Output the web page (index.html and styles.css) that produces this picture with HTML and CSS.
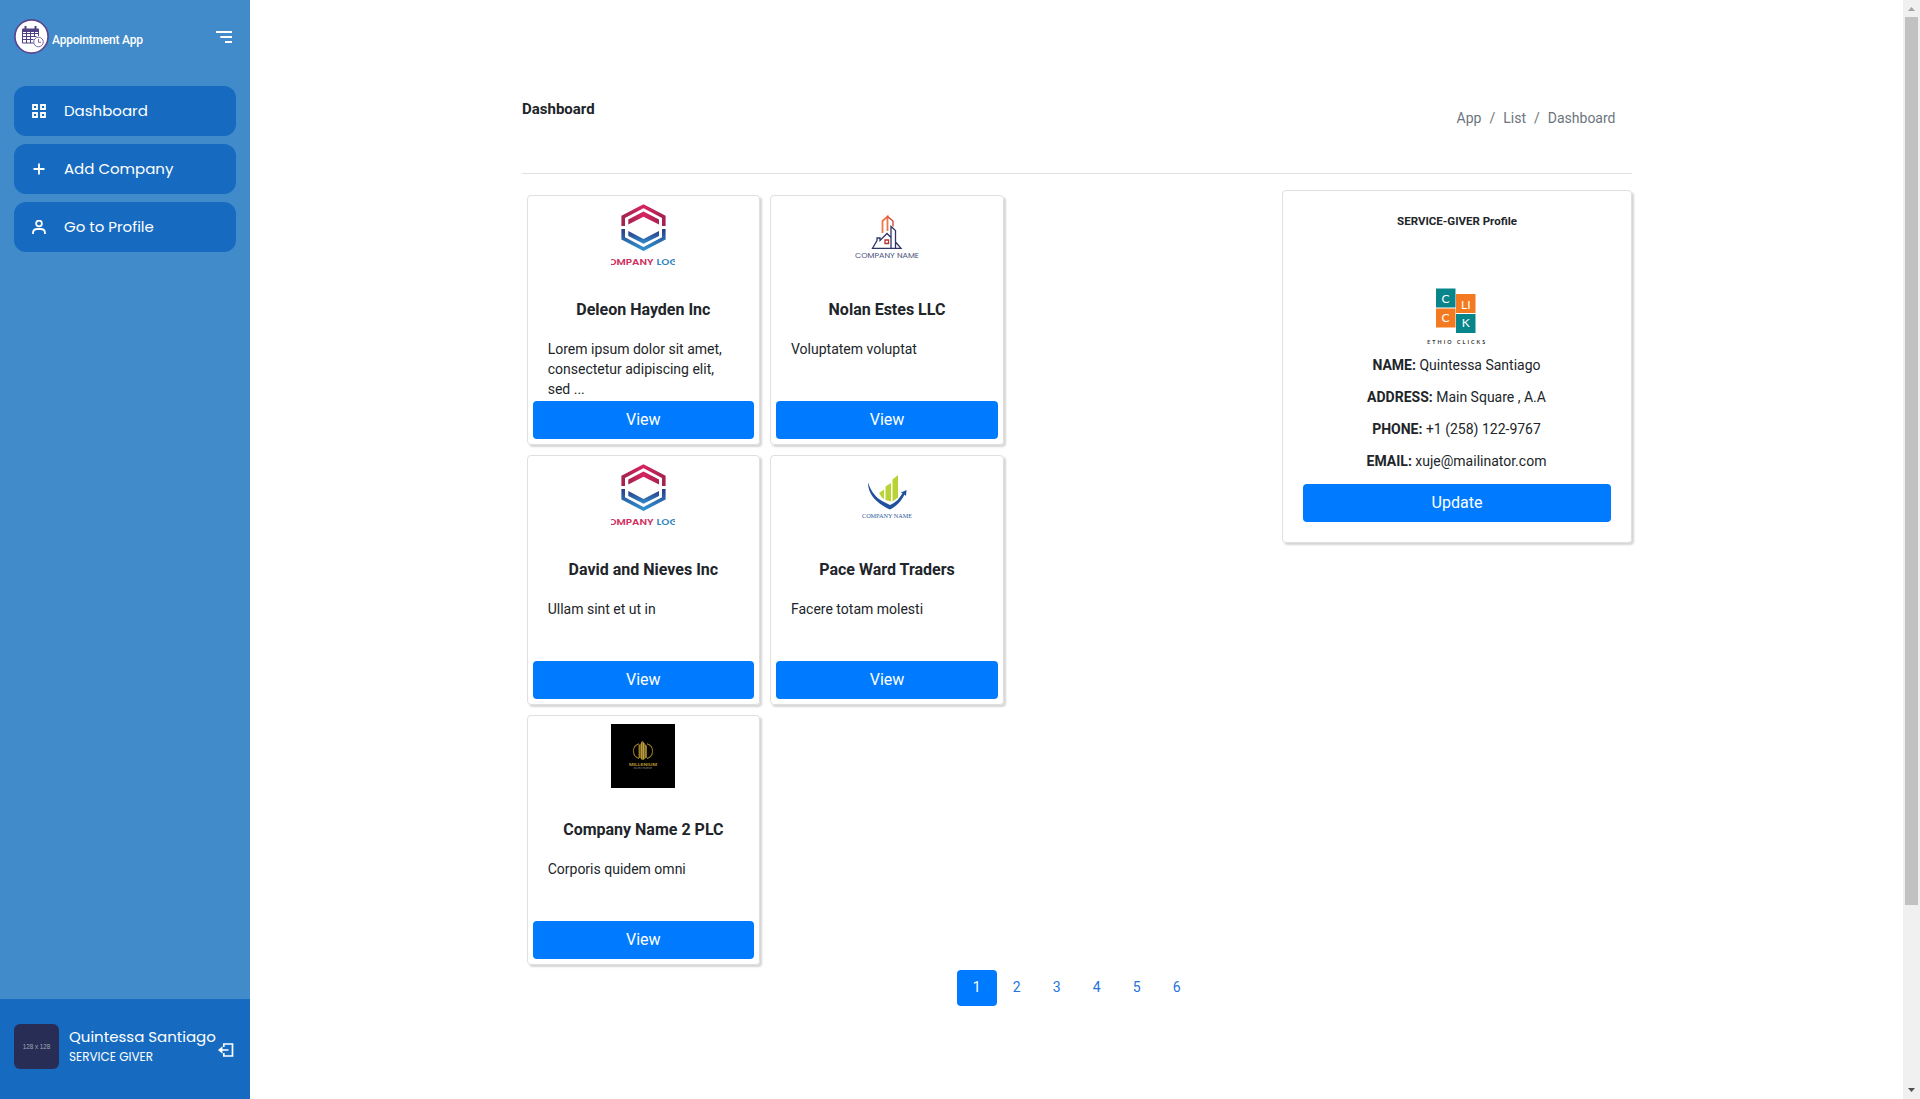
FILE: index.html
```html
<!DOCTYPE html>
<html lang="en">
<head>
<meta charset="utf-8">
<title>Appointment App</title>
<link rel="stylesheet" href="styles.css">
</head>
<body>
<svg class="defs" width="0" height="0" aria-hidden="true">
  <defs>
    <linearGradient id="pink" x1="0" y1="0" x2="1" y2="0"><stop offset="0" stop-color="#a32351"/><stop offset=".5" stop-color="#d9235f"/><stop offset="1" stop-color="#a32351"/></linearGradient>
    <linearGradient id="blue" x1="0" y1="0" x2="0" y2="1"><stop offset="0" stop-color="#2b3d85"/><stop offset="1" stop-color="#2f8fcd"/></linearGradient>
    <linearGradient id="gold" x1="0" y1="0" x2="1" y2="0"><stop offset="0" stop-color="#8a6d22"/><stop offset=".5" stop-color="#c9a946"/><stop offset="1" stop-color="#8a6d22"/></linearGradient>
    <symbol id="hexagon" viewBox="0 0 64 64">
      <path d="M12.200 22V12.900L32.500 2.200l20.300 10.700V22" fill="none" stroke="url(#pink)" stroke-width="3.600"/>
      <path d="M17.300 15.600L32.500 7.600l15.500 8v5L32.500 12.800l-15.200 7.800z" fill="url(#pink)"/>
      <path d="M12.200 25v9.300L32.500 45l20.300-10.700V25" fill="none" stroke="url(#blue)" stroke-width="3.600"/>
      <path d="M17.300 27L32.500 35l15.500-8v5L32.500 39.800l-15.200-7.800z" fill="url(#blue)"/>
      <text x="-10.500" y="60.500" textLength="53" lengthAdjust="spacingAndGlyphs" class="brand brand-red">COMPANY</text>
      <text x="45.500" y="60.500" textLength="29" lengthAdjust="spacingAndGlyphs" class="brand brand-blue">LOGO</text>
    </symbol>
  </defs>
</svg>
<div class="app">
  <aside class="sidebar">
    <header class="brand-row">
      <svg class="app-logo" viewBox="0 0 35 35">
        <circle cx="17.500" cy="17.500" r="16.600" fill="#fff" stroke="#5b458f" stroke-width="1.700"/>
        <g fill="none" stroke="#4e4083" stroke-width="1">
          <path d="M20 24H8.500V10h16v7M8.500 14.500h16M8.500 17.500h14M8.500 20.500h11M12.500 13v11M16.500 13v11M20.500 13v5"/>
          <path d="M8.500 11.500h16" stroke-width="3"/>
          <path d="M11.500 7v4M21.500 7v4" stroke-width="2"/>
          <circle cx="24.500" cy="23" r="4.800" fill="#fff" stroke="#7c68a8"/>
          <path d="M24.500 20v3.300H27" stroke="#7c68a8"/>
        </g>
      </svg>
      <span class="app-name">Appointment App</span>
      <svg class="menu-icon" viewBox="0 0 16 12"><path d="M0 1h16M4.300 6H16M9 11h7" stroke="#fff" stroke-width="1.900"/></svg>
    </header>
    <nav class="nav">
      <a class="nav-item"><svg class="nav-icon" viewBox="0 0 14 14"><path d="M1 1h4v4H1zM9 1h4v4H9zM1 9h4v4H1zM9 9h4v4H9z"/></svg>Dashboard</a>
      <a class="nav-item"><svg class="nav-icon" viewBox="0 0 14 14"><path d="M7 1.500v11M1.500 7h11"/></svg>Add Company</a>
      <a class="nav-item"><svg class="nav-icon" viewBox="0 0 14 14"><circle cx="7" cy="3.500" r="2.900"/><path d="M1 14v-.800C1 10.500 3 9 5.500 9h3c2.500 0 4.500 1.500 4.500 4.200v.800"/></svg>Go to Profile</a>
    </nav>
    <footer class="user">
      <div class="avatar">128 x 128</div>
      <div class="user-text"><div class="user-name">Quintessa Santiago</div><div class="user-role">SERVICE GIVER</div></div>
      <svg class="logout" viewBox="0 0 16 14"><path d="M5.800 4V1h8.700v12H5.800v-3M3 7h7.500" fill="none" stroke="#fff" stroke-width="1.700"/><path d="M4.500 3.200L0 7l4.500 3.800z" fill="#fff"/></svg>
    </footer>
  </aside>

  <main class="main">
    <div class="container">
      <div class="page-head">
        <h1 class="page-title">Dashboard</h1>
        <div class="crumbs"><span>App</span><span>/</span><span>List</span><span>/</span><span>Dashboard</span></div>
      </div>
      <div class="columns">
        <section class="cards">
          <article class="card">
            <svg class="logo" viewBox="0 0 64 64"><use href="#hexagon"/></svg>
            <h2 class="card-title">Deleon Hayden Inc</h2>
            <p class="card-text">Lorem ipsum dolor sit amet, consectetur adipiscing elit, sed ...</p>
            <a class="btn">View</a>
          </article>
          <article class="card">
            <svg class="logo" viewBox="0 0 64 64">
              <g fill="none" stroke-width="1.300" transform="translate(-1 0)">
                <path d="M28.500 29V17l5-4.500V27" stroke="#f0764a" stroke-width="1.800"/>
                <path d="M33.500 12.500l5.500 4.500v5.500" stroke="#c8402f"/>
                <path d="M37 44V22.500l4.500 4V44M41.500 38l5.500 6.300H18.500L23 36.500V34h3v2.500l7-7 4 4" stroke="#2f3566"/>
                <path d="M31 36h3.500v3.500H31z" stroke="#b8322f"/>
              </g>
              <text x="0" y="53.500" textLength="64" lengthAdjust="spacingAndGlyphs" class="tagline">COMPANY NAME</text>
            </svg>
            <h2 class="card-title">Nolan Estes LLC</h2>
            <p class="card-text">Voluptatem voluptat</p>
            <a class="btn">View</a>
          </article>
          <article class="card">
            <svg class="logo" viewBox="0 0 64 64"><use href="#hexagon"/></svg>
            <h2 class="card-title">David and Nieves Inc</h2>
            <p class="card-text">Ullam sint et ut in</p>
            <a class="btn">View</a>
          </article>
          <article class="card">
            <svg class="logo" viewBox="0 0 64 64">
              <path d="M24 29l5-3.500V35l-2-1.500zM30.500 22.500l5.500-3.500v18.500l-5.500-1.500zM37.500 15.500l5.500-4.500v22.500l-5.500 4z" fill="#b9d334"/>
              <path d="M13 18.500c3 9 8 15 14 18.500l8 4c6-2.500 9.500-6.500 12.500-12l-2-.200L51.500 26l-.500 6-1.500-1.500C46 38 40 43 35 45.500 24 40.500 13 32 13 18.500z" fill="#20519b"/>
              <text x="7" y="53.500" textLength="50" lengthAdjust="spacingAndGlyphs" class="tagline-serif">COMPANY NAME</text>
            </svg>
            <h2 class="card-title">Pace Ward Traders</h2>
            <p class="card-text">Facere totam molesti</p>
            <a class="btn">View</a>
          </article>
          <article class="card">
            <svg class="logo" viewBox="0 0 64 64">
              <path d="M0 0h64v64H0z" fill="#000"/>
              <path d="M28 34.500A7.700 7.700 0 0 1 28 19.700M36 34.500a7.700 7.700 0 0 0 0-14.800" fill="none" stroke="url(#gold)" stroke-width="1.100"/>
              <path d="M27.500 21l2-1v14h-2zM29.800 19l1.800-2.500V36l-1.800-1zM31.900 17.500l1.800 2V35l-1.800 1zM34 20l2 2v11.500l-2 1z" fill="url(#gold)"/>
              <text x="18" y="42" textLength="28" lengthAdjust="spacingAndGlyphs" class="gold-name">MILLENIUM</text>
              <text x="22.500" y="45" textLength="19" lengthAdjust="spacingAndGlyphs" class="gold-sub">INVESTMENT</text>
            </svg>
            <h2 class="card-title">Company Name 2 PLC</h2>
            <p class="card-text">Corporis quidem omni</p>
            <a class="btn">View</a>
          </article>
        </section>
        <aside class="profile">
          <h2 class="profile-title">SERVICE-GIVER Profile</h2>
          <svg class="profile-logo" viewBox="0 0 64 64">
            <path d="M12 4.500h19.500v19H12z" fill="#08858a"/>
            <path d="M32 10h19.500v19H32zM12 24.500h19.500V43.500H12z" fill="#f37a21"/>
            <path d="M32 30h19.500v19H32z" fill="#08858a"/>
            <g class="tile-text"><text x="21.500" y="18.700">C</text><text x="41.800" y="24.500">LI</text><text x="21.500" y="37.700">C</text><text x="41.800" y="42.500">K</text></g>
            <text x="3.200" y="59.800" textLength="58" class="clicks">ETHIO CLICKS</text>
          </svg>
          <p class="fact"><b>NAME:</b> Quintessa Santiago</p>
          <p class="fact"><b>ADDRESS:</b> Main Square , A.A</p>
          <p class="fact"><b>PHONE:</b> +1 (258) 122-9767</p>
          <p class="fact"><b>EMAIL:</b> xuje@mailinator.com</p>
          <a class="btn btn-update">Update</a>
        </aside>
      </div>
      <nav class="pages"><a class="page current">1</a><a class="page">2</a><a class="page">3</a><a class="page">4</a><a class="page">5</a><a class="page">6</a></nav>
    </div>
  </main>

  <div class="scrollbar">
    <svg class="arrow" viewBox="0 0 17 17"><path d="M5 11l3.500-4 3.500 4z" fill="#a3a3a3"/></svg>
    <div class="thumb"></div>
    <svg class="arrow arrow-down" viewBox="0 0 17 17"><path d="M5 6l3.500 4L12 6z" fill="#505050"/></svg>
  </div>
</div>
</body>
</html>
```
FILE: styles.css
```css
* { box-sizing: border-box; }
body { margin: 0; background: #fff; color: #212529; font: 14px/20px Roboto, "Liberation Sans", sans-serif; overflow: hidden; }
h1, h2, p { margin: 0; }
.defs { position: absolute; }
.app { display: grid; grid-template-columns: 250px 1fr 17px; height: 1099px; }

.sidebar { display: flex; flex-direction: column; background: #428bca; color: #fff; }
.brand-row { display: flex; align-items: center; height: 72px; padding: 0 18px 0 14px; }
.app-logo { width: 35px; height: 35px; }
.app-name { margin: 7px auto 0 3px; font-size: 12px; font-weight: 500; letter-spacing: -.2px; white-space: nowrap; }
.menu-icon { width: 16px; height: 12px; margin-top: 2px; }
.nav { display: flex; flex-direction: column; gap: 8px; padding: 14px 14px 0; }
.nav-item { display: flex; align-items: center; gap: 18px; height: 50px; padding-left: 18px; border-radius: 12px; background: #166bc1; font: 400 15px/24px Poppins, Inter, sans-serif; }
.nav-icon { width: 14px; height: 14px; fill: none; stroke: #fff; stroke-width: 1.8; }
.user { display: flex; align-items: center; height: 100px; margin-top: auto; padding: 0 16px 5px 14px; background: #166bc1; font-family: Poppins, Inter, sans-serif; }
.avatar { width: 45px; height: 45px; border-radius: 6px; background: #272d55; color: #a2a5b8; font: 6.3px/45px "Liberation Sans", sans-serif; text-align: center; }
.user-text { flex: 1; padding-left: 10px; white-space: nowrap; }
.user-name { font-size: 15px; line-height: 20px; }
.user-role { font-size: 12px; line-height: 20px; }
.logout { flex: none; width: 16px; height: 14px; margin: 7px 0 0 -4px; }

.main { padding: 84px 0 0 272px; }
.container { width: 1110px; }
.page-head { display: flex; justify-content: space-between; height: 90px; border-bottom: 1px solid #e1e1e1; }
.page-title { margin-top: 15px; font-size: 15px; font-weight: 700; line-height: 20px; }
.crumbs { display: flex; gap: 8px; margin: 24px 16.5px 0 0; color: #6c757d; }
.columns { display: flex; justify-content: space-between; align-items: flex-start; padding-top: 16px; }
.cards { display: grid; grid-template-columns: 233.3px 234px; gap: 10px; padding: 5px 0 0 4.7px; }
.card, .profile { display: flex; flex-direction: column; border: 1px solid #dfdfdf; border-radius: 4px; box-shadow: 2px 2px 2px rgba(0, 0, 0, .17); }
.card { height: 250px; padding: 8px 5px 5px; }
.logo { width: 64px; height: 64px; align-self: center; overflow: hidden; }
.card-title { margin-top: 30px; font-size: 16px; font-weight: 700; line-height: 24px; text-align: center; }
.card-text { margin: 17px 15px 0; }
.btn { height: 38px; margin-top: auto; border-radius: 4px; background: #007bff; color: #fff; font-size: 16px; line-height: 37px; text-align: center; }
.profile { width: 350px; height: 353px; padding: 20px; text-align: center; }
.profile-title { font-size: 11.5px; font-weight: 700; line-height: 20px; }
.profile-logo { width: 64px; height: 64px; margin: 53px 2px 7px 0; align-self: center; overflow: visible; }
.fact { height: 32px; margin-right: 1px; }
.btn-update { margin-top: 1px; }

.pages { display: flex; padding: 5px 0 0 434.7px; color: #2473da; }
.page { width: 40px; height: 36px; border-radius: 4px; line-height: 35px; text-align: center; }
.current { background: #007bff; color: #fff; }

.scrollbar { display: flex; flex-direction: column; background: #f0f0f0; }
.arrow { width: 17px; height: 17px; }
.thumb { width: 13px; height: 888px; margin-left: 2px; background: #c1c1c1; }
.arrow-down { margin-top: auto; }

.brand { font: 600 8.8px Poppins, Inter, sans-serif; }
.brand-red { fill: #cf2f5c; }
.brand-blue { fill: #3186c2; }
.tagline { font: 6.5px Poppins, Inter, sans-serif; fill: #4a4f7c; }
.tagline-serif { font: 5.5px "Liberation Serif", serif; fill: #2e5b9a; }
.gold-name { font: 700 4px Inter, sans-serif; fill: #b3912f; }
.gold-sub { font: 2.5px Inter, sans-serif; fill: #8b8b8b; }
.tile-text { font: 12px Lato, sans-serif; fill: #fff; text-anchor: middle; }
.clicks { font: 700 5.3px Lato, sans-serif; fill: #333; }
```
